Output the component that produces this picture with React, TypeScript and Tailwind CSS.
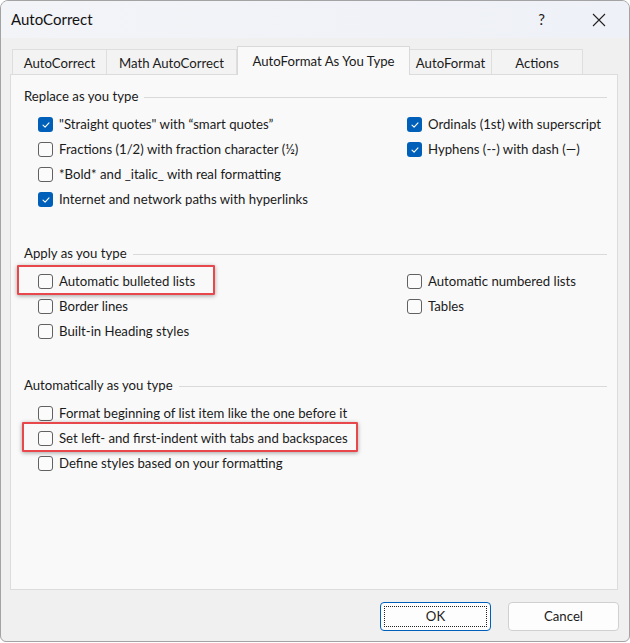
import React from "react";

type Item = {
  label: string;
  checked?: boolean;
};

const font = {
  fontFamily: "Lato, 'Noto Sans', sans-serif",
};

function CheckBox({ checked }: { checked?: boolean }) {

  if (checked) {
    return (
      <div className="w-[15px] h-[15px] rounded-[3px] bg-[#005fb8] flex items-center justify-center shrink-0">
        <svg width="10" height="10" viewBox="0 0 10 10">
          <path
            d="M2 5.2 L4.1 7.2 L8 2.9"
            fill="none"
            stroke="white"
            strokeWidth="1.1"
            strokeLinecap="round"
            strokeLinejoin="round"
          />
        </svg>
      </div>
    );
  }

  return (
    <div className="w-[15px] h-[15px] rounded-[3px] border border-[#616161] bg-[#fbfbfb] shrink-0" />
  );

}

function Row({
  item,
  marked,
}: {
  item: Item;
  marked?: "short" | "long";
}) {

  return (
    <div className="relative h-[25px] flex items-center gap-[6px]">

      <CheckBox checked={item.checked} />

      <span className="text-[13.2px] text-[#1b1b1b] whitespace-nowrap">
        {item.label}
      </span>

      {/* Red annotation boxes */}
      {
        marked === "short" && (
          <div className="absolute left-[-21px] top-[-4px] w-[198px] h-[30px] border-2 border-[#e8474c] rounded-[1px] shadow-[0_1px_4px_rgba(0,0,0,0.35)]" />
        )
      }

      {
        marked === "long" && (
          <div className="absolute left-[-16px] top-[-4px] w-[336px] h-[30px] border-2 border-[#e8474c] rounded-[1px] shadow-[0_1px_4px_rgba(0,0,0,0.35)]" />
        )
      }

    </div>
  );

}

function SectionHeader({ title }: { title: string }) {

  return (
    <div className="h-[20px] flex items-center gap-[6px] pr-[10px]">

      <span className="text-[13.2px] text-[#1b1b1b] whitespace-nowrap">
        {title}
      </span>

      <div className="flex-1 h-px bg-[#dadada]" />

    </div>
  );

}

export default function App() {

  const tabs = [
    { label: "AutoCorrect", width: "w-[95px]" },
    { label: "Math AutoCorrect", width: "w-[130px]" },
    { label: "AutoFormat As You Type", width: "w-[173px]", active: true },
    { label: "AutoFormat", width: "w-[82px]" },
    { label: "Actions", width: "w-[91px]" },
  ];

  return (
    <main
      className="w-[630px] h-[643px] bg-white overflow-hidden"
      style={font}
    >

      <div className="w-[630px] h-[642px] rounded-t-[8px] rounded-b-[6px] border border-[#a3a3a3] bg-[#f0f0f0] flex flex-col overflow-hidden">

        {/* Title bar */}
        <div className="h-[37px] shrink-0 bg-gradient-to-r from-[#f3f4f8] to-[#eef1f7] flex items-center pl-[10px]">

          <span className="text-[15px] text-[#111] flex-1">
            AutoCorrect
          </span>

          <span className="text-[15px] text-[#222] mr-[47px]">
            ?
          </span>

          <svg width="14" height="14" viewBox="0 0 14 14" className="mr-[23px]">
            <path
              d="M1 1 L13 13 M13 1 L1 13"
              stroke="#222"
              strokeWidth="1.1"
            />
          </svg>

        </div>

        {/* Tabs */}
        <div className="h-[36px] shrink-0 flex items-end pl-[11px] relative z-10">

          {
            tabs.map((tab) => (

              <div
                key={tab.label}
                className={
                  tab.active
                    ? `${tab.width} h-[29px] mb-[-1px] pt-[2px] bg-[#f9f9f9] border border-b-0 border-[#d9d9d9] flex items-center justify-center text-[13.2px] text-[#1b1b1b]`
                    : `${tab.width} h-[25px] pt-[3px] bg-[#f3f3f3] border border-b-0 border-l-0 first:border-l border-[#dedede] flex items-center justify-center text-[13.2px] text-[#1b1b1b]`
                }
              >
                {tab.label}
              </div>

            ))
          }

        </div>

        {/* Panel */}
        <div className="ml-[9px] w-[608px] h-[516px] shrink-0 bg-[#f9f9f9] border border-[#dcdcdc] pt-[12px] pl-[13px]">

          {/* Replace as you type */}
          <SectionHeader title="Replace as you type" />

          <div className="flex mt-[5px] pl-[14px]">

            <div className="w-[369px]">
              <Row item={{ label: "\"Straight quotes\" with “smart quotes”", checked: true }} />
              <Row item={{ label: "Fractions (1/2) with fraction character (½)" }} />
              <Row item={{ label: "*Bold* and _italic_ with real formatting" }} />
              <Row item={{ label: "Internet and network paths with hyperlinks", checked: true }} />
            </div>

            <div>
              <Row item={{ label: "Ordinals (1st) with superscript", checked: true }} />
              <Row item={{ label: "Hyphens (--) with dash (—)", checked: true }} />
            </div>

          </div>

          {/* Apply as you type */}
          <div className="mt-[32px]">
            <SectionHeader title="Apply as you type" />
          </div>

          <div className="flex mt-[5px] pl-[14px]">

            <div className="w-[369px]">
              <Row item={{ label: "Automatic bulleted lists" }} marked="short" />
              <Row item={{ label: "Border lines" }} />
              <Row item={{ label: "Built-in Heading styles" }} />
            </div>

            <div>
              <Row item={{ label: "Automatic numbered lists" }} />
              <Row item={{ label: "Tables" }} />
            </div>

          </div>

          {/* Automatically as you type */}
          <div className="mt-[32px]">
            <SectionHeader title="Automatically as you type" />
          </div>

          <div className="mt-[5px] pl-[14px]">
            <Row item={{ label: "Format beginning of list item like the one before it" }} />
            <Row item={{ label: "Set left- and first-indent with tabs and backspaces" }} marked="long" />
            <Row item={{ label: "Define styles based on your formatting" }} />
          </div>

        </div>

        {/* Buttons */}
        <div className="flex justify-end gap-[17px] pr-[10px] mt-[12px]">

          <button className="w-[111px] h-[29px] rounded-[4px] border border-[#005fb8] bg-[#fdfdfd] p-[3px]">
            <div className="w-full h-full border border-dotted border-[#222] flex items-center justify-center text-[13.2px] text-[#1b1b1b]">
              OK
            </div>
          </button>

          <button className="w-[111px] h-[29px] rounded-[4px] border border-[#d0d0d0] bg-[#fdfdfd] flex items-center justify-center text-[13.2px] text-[#1b1b1b]">
            Cancel
          </button>

        </div>

      </div>

    </main>
  );

}
